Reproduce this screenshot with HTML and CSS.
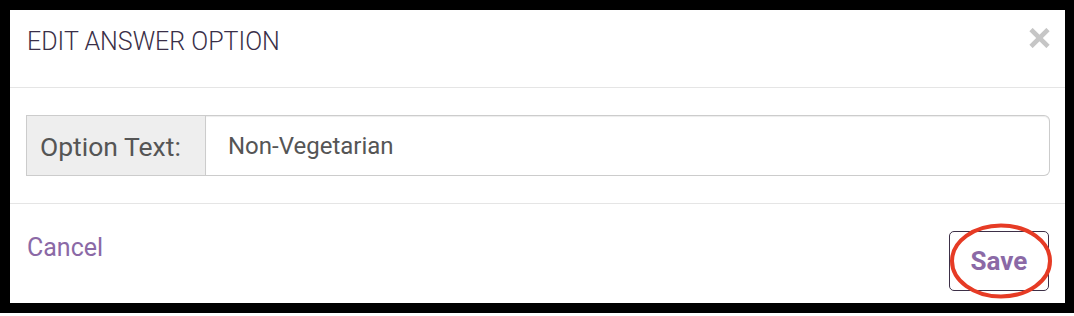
FILE: index.html
```html
<!DOCTYPE html>
<html>
<head>
<meta charset="utf-8">
<link rel="stylesheet" href="styles.css">
</head>
<body>
<div class="frame">
  <div class="modal">
    <div class="modal-header">
      <h4 class="modal-title">EDIT ANSWER OPTION</h4>
      <button class="close" aria-label="Close">
        <svg width="21" height="20" viewBox="0 0 21 20"><path d="M2 1.5 L19 18.5 M19 1.5 L2 18.5" stroke="#c6c6c6" stroke-width="4.6" fill="none"/></svg>
      </button>
    </div>
    <div class="modal-body">
      <div class="input-group">
        <span class="addon">Option Text:</span>
        <input class="field" type="text" value="Non-Vegetarian">
      </div>
    </div>
    <div class="modal-footer">
      <a class="cancel">Cancel</a>
      <div class="save-wrap">
        <button class="save">Save</button>
        <svg class="circle" width="110" height="84" viewBox="0 0 110 84"><ellipse cx="55" cy="42" rx="49" ry="35.5" fill="none" stroke="#e63b25" stroke-width="4"/></svg>
      </div>
    </div>
  </div>
</div>
</body>
</html>
```

FILE: styles.css
```css
html, body {
  margin: 0;
  padding: 0;
  background: #fff;
}
body {
  font-family: Roboto, "Liberation Sans", sans-serif;
}
.frame {
  width: 1074px;
  height: 313px;
  box-sizing: border-box;
  border-style: solid;
  border-color: #000;
  border-width: 10px 9px 10px 10px;
  background: #fff;
}
.modal {
  display: flex;
  flex-direction: column;
  height: 100%;
}
.modal-header {
  height: 77px;
  border-bottom: 1px solid #e5e5e5;
  display: flex;
  align-items: flex-start;
  justify-content: space-between;
  padding: 0 15px 0 17px;
}
.modal-title {
  margin: 0;
  padding-top: 18px;
  font-size: 25px;
  line-height: 28px;
  font-weight: 300;
  color: #3a2f48;
  letter-spacing: 0;
}
.close {
  margin-top: 18px;
  padding: 0;
  border: 0;
  background: none;
  width: 21px;
  height: 20px;
  display: block;
}
.close svg { display: block; }
.modal-body {
  padding: 27px 15px 27px 16px;
  border-bottom: 1px solid #e5e5e5;
}
.input-group {
  display: flex;
  height: 61px;
}
.addon {
  box-sizing: border-box;
  width: 180px;
  display: flex;
  align-items: center;
  padding-left: 13px;
  padding-top: 1px;
  background: #eee;
  border: 1px solid #ccc;
  color: #555;
  font-size: 26.5px;
}
.field {
  flex: 1;
  box-sizing: border-box;
  height: 61px;
  border: 1px solid #ccc;
  border-left: 0;
  border-radius: 0 6px 6px 0;
  padding: 0 0 0 22px;
  font-family: Roboto, "Liberation Sans", sans-serif;
  font-size: 24px;
  color: #555;
  outline: none;
  box-shadow: inset 0 1px 1px rgba(0,0,0,.075);
}
.modal-footer {
  flex: 1;
  display: flex;
  justify-content: space-between;
  align-items: flex-start;
  padding: 27px 16px 0 17px;
}
.cancel {
  color: #8b69a6;
  font-size: 25px;
  line-height: 28px;
  margin-top: 3px;
  cursor: pointer;
}
.save-wrap {
  position: relative;
}
.save {
  display: block;
  width: 100px;
  height: 60px;
  box-sizing: border-box;
  border: 1px solid #3d3047;
  border-radius: 5px;
  background: #fff;
  color: #8b69a6;
  font-family: Roboto, "Liberation Sans", sans-serif;
  font-weight: 700;
  font-size: 26px;
  padding: 0;
}
.circle {
  position: absolute;
  left: -3px;
  top: -12px;
  pointer-events: none;
}
```
